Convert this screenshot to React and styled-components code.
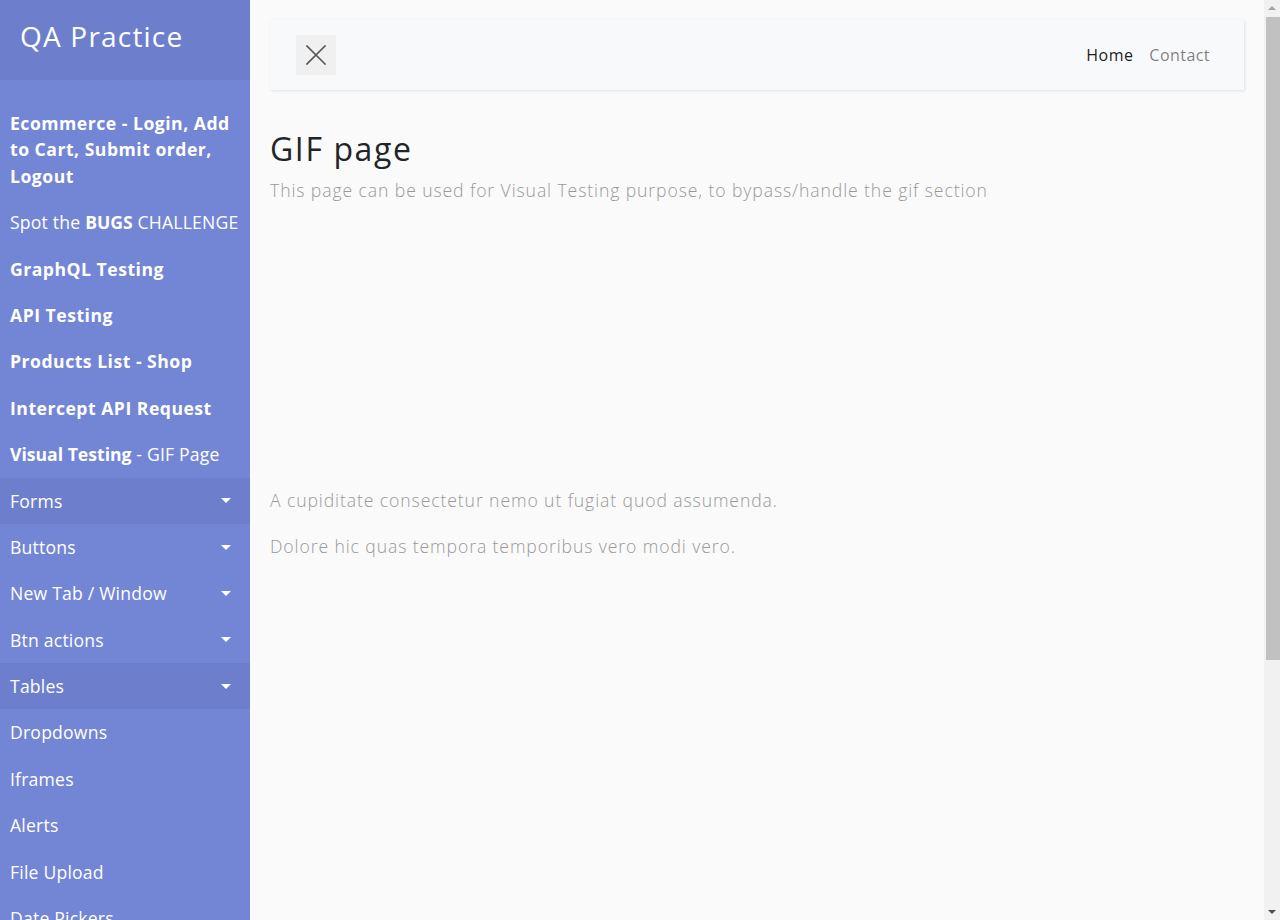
import React from "react";
import styled, { createGlobalStyle } from "styled-components";

const GlobalStyle = createGlobalStyle`
  html, body {
    margin: 0;
    padding: 0;
  }
  body {
    margin-right: 16px;
    background: #fafafa;
    font-family: "Open Sans", "DejaVu Sans", sans-serif;
    font-size: 16px;
    color: #212529;
  }
  * {
    box-sizing: border-box;
  }
`;

/* the page's scrollbar, drawn since the browser hides its own */
const ScrollTrack = styled.div`
  position: fixed;
  top: 0;
  right: 0;
  width: 16px;
  height: 100vh;
  display: flex;
  flex-direction: column;
  align-items: center;
  background: #f1f1f1;
`;

const ScrollArrow = styled.span`
  flex: none;
  width: 0;
  height: 0;
  margin: ${(p) => (p.$down ? "auto 0 6px" : "6px 0 0")};
  border-left: 4px solid transparent;
  border-right: 4px solid transparent;
  ${(p) =>
    p.$down
      ? "border-top: 4px solid #505050;"
      : "border-bottom: 4px solid #a3a3a3;"}
`;

const ScrollThumb = styled.span`
  position: absolute;
  top: 17px;
  left: 2px;
  width: 14px;
  height: 643px;
  background: #c1c1c1;
`;

const Wrapper = styled.div`
  display: flex;
  align-items: stretch;
  width: 100%;
`;

const Sidebar = styled.nav`
  flex: 0 0 250px;
  width: 250px;
  min-height: 100vh;
  background: #7386d5;
  color: #fff;
`;

const SidebarHeader = styled.div`
  height: 80px;
  padding: 20px;
  background: #6d7fcc;
`;

const Brand = styled.h3`
  margin: 0;
  font-size: 28px;
  font-weight: 400;
  line-height: 1.2;
  letter-spacing: 1.2px;
`;

const Menu = styled.ul`
  list-style: none;
  margin: 0;
  padding: 20px 0;
`;

const MenuLink = styled.a`
  display: flex;
  align-items: center;
  justify-content: space-between;
  padding: 10px;
  font-size: 17.6px;
  line-height: 1.5;
  font-weight: ${(p) => (p.$bold ? 700 : 400)};
  color: #fff;
  text-decoration: none;
  background: ${(p) => (p.$active ? "#6d7fcc" : "transparent")};
  letter-spacing: ${(p) => (p.$bold ? "0.5px" : "0.2px")};

  b {
    font-weight: 700;
    letter-spacing: 0;
  }
`;

const Caret = styled.span`
  flex: none;
  width: 0;
  height: 0;
  margin-right: 9px;
  border-top: 5.3px solid #fff;
  border-left: 5.3px solid transparent;
  border-right: 5.3px solid transparent;
`;

const Content = styled.main`
  flex: 1;
  min-width: 0;
  min-height: 100vh;
  padding: 20px;
`;

const Navbar = styled.header`
  display: flex;
  align-items: center;
  justify-content: space-between;
  height: 70px;
  padding: 0 26px;
  margin-bottom: 40px;
  background: #f8f9fa;
  box-shadow: 1px 1px 3px rgba(0, 0, 0, 0.1);
`;

const ToggleButton = styled.button`
  display: flex;
  align-items: center;
  justify-content: center;
  width: 40px;
  height: 40px;
  padding: 0;
  border: none;
  background: #f0f0f0;
  cursor: pointer;
`;

const NavLinks = styled.div`
  display: flex;
`;

const NavLink = styled.a`
  padding: 8px;
  font-size: 16px;
  line-height: 1.5;
  letter-spacing: 0.45px;
  color: ${(p) => (p.$active ? "rgba(0,0,0,0.9)" : "rgba(0,0,0,0.5)")};
  text-decoration: none;
`;

const Title = styled.h2`
  margin: 0 0 8px;
  font-size: 32px;
  font-weight: 500;
  line-height: 1.2;
  letter-spacing: 1.6px;
  color: #212529;
`;

const Text = styled.p`
  margin: 0 0 16px;
  font-size: 17.6px;
  font-weight: 300;
  line-height: 1.7;
  letter-spacing: 0.9px;
  color: #999;
`;

const GifArea = styled.div`
  height: 264px;
`;

const items = [
  { label: "Ecommerce - Login, Add to Cart, Submit order, Logout", bold: true },
  { label: "Spot the ", strong: "BUGS", tail: " CHALLENGE" },
  { label: "GraphQL Testing", bold: true },
  { label: "API Testing", bold: true },
  { label: "Products List - Shop", bold: true },
  { label: "Intercept API Request", bold: true },
  { strong: "Visual Testing", tail: " - GIF Page" },
  { label: "Forms", dropdown: true, active: true },
  { label: "Buttons", dropdown: true },
  { label: "New Tab / Window", dropdown: true },
  { label: "Btn actions", dropdown: true },
  { label: "Tables", dropdown: true, active: true },
  { label: "Dropdowns" },
  { label: "Iframes" },
  { label: "Alerts" },
  { label: "File Upload" },
  { label: "Date Pickers" },
  { label: "Pagination" },
  { label: "Loader" },
  { label: "Sliders" },
  { label: "Drag and Drop" },
  { label: "Shadow DOM" },
  { label: "Random Data" },
];

function CloseIcon() {
  return (
    <svg width="20" height="20" viewBox="0 0 20 20" fill="none">
      <path
        d="M1 1 L19 19 M19 1 L1 19"
        stroke="#555"
        strokeWidth="1.6"
        strokeLinecap="square"
      />
    </svg>
  );
}

export default function App() {
  return (
    <>
      <GlobalStyle />
      <Wrapper>
        <Sidebar>
          <SidebarHeader>
            <Brand>QA Practice</Brand>
          </SidebarHeader>
          <Menu>
            {items.map((item, index) => (
              <li key={index}>
                <MenuLink href="#" $bold={item.bold} $active={item.active}>
                  <span>
                    {item.label}
                    {item.strong && <b>{item.strong}</b>}
                    {item.tail}
                  </span>
                  {item.dropdown && <Caret />}
                </MenuLink>
              </li>
            ))}
          </Menu>
        </Sidebar>
        <Content>
          <Navbar>
            <ToggleButton aria-label="toggle sidebar">
              <CloseIcon />
            </ToggleButton>
            <NavLinks>
              <NavLink href="#" $active>
                Home
              </NavLink>
              <NavLink href="#">Contact</NavLink>
            </NavLinks>
          </Navbar>
          <Title>GIF page</Title>
          <Text>
            This page can be used for Visual Testing purpose, to bypass/handle
            the gif section
          </Text>
          <GifArea />
          <Text>A cupiditate consectetur nemo ut fugiat quod assumenda.</Text>
          <Text>Dolore hic quas tempora temporibus vero modi vero.</Text>
        </Content>
      </Wrapper>
      <ScrollTrack aria-hidden="true">
        <ScrollArrow />
        <ScrollThumb />
        <ScrollArrow $down />
      </ScrollTrack>
    </>
  );
}
